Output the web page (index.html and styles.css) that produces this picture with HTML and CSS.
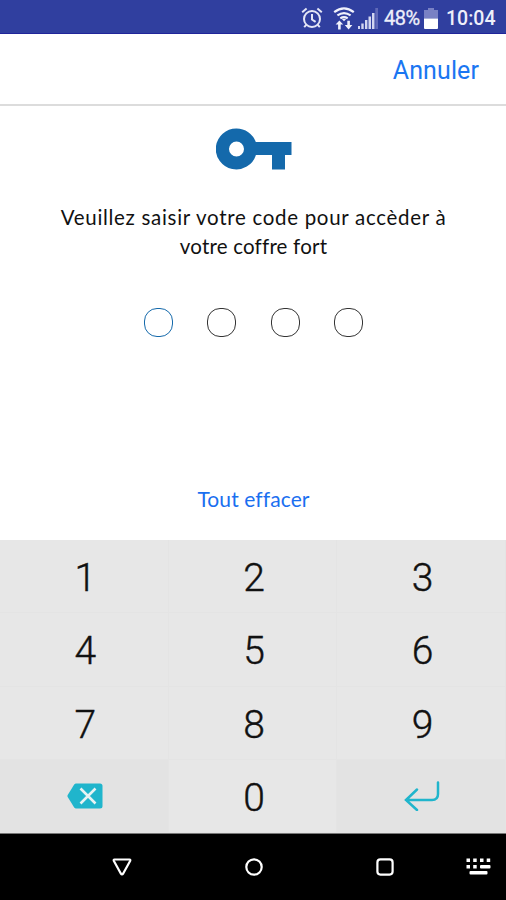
FILE: index.html
```
<!DOCTYPE html>
<html lang="fr">
<head>
  <meta charset="UTF-8">
  <meta name="viewport" content="width=device-width, initial-scale=1">
  <title>Coffre fort</title>
  <link rel="stylesheet" href="styles.css">
</head>

<body>
  <div class="status-bar">
    <svg class="icon-alarm" width="22" height="22" viewBox="0 0 22 22" fill="none" stroke="#e4e6f6" stroke-width="2">
      <circle cx="11" cy="12" r="8"/>
      <path d="M11 7v5.500l3.600 2.400M1.200 5.200l4.400-3.700M20.800 5.200l-4.400-3.700M5.500 17.600l-2.300 2.600M16.500 17.600l2.300 2.600"/>
    </svg>
    <svg class="icon-wifi" width="22" height="23" viewBox="0 0 22 23" fill="none" stroke="#f1f2fb" stroke-width="2.200">
      <path d="M1.200 5.200q9.800-7.600 19.600 0M4.400 8.400q6.600-4.600 13.200 0M7.300 11.300q3.700-2.400 7.400 0"/>
      <path d="M8.600 11.800h4.800l-2.400 2.500z" fill="#f1f2fb" stroke="none"/>
      <path d="M2.600 17.600l3.800-4.200 3.800 4.200H7.700v4.800H5.100v-4.800zM11.800 18h2.500v-4.200h2.600V18h2.500l-3.800 4.500z" fill="#f1f2fb" stroke="none"/>
    </svg>
    <svg class="icon-signal" width="20" height="21" viewBox="0 0 20 21">
      <path d="M0 18h2v3H0zM3.300 15.500h2.400V21H3.300zM7 12h2.400v9H7zM10.500 8.500H13V21h-2.500zM14 5h2.500v16H14z" fill="#d3d6f0"/>
      <path d="M17.300 0H20v21h-2.700z" fill="#6069b8"/>
    </svg>
    <span class="battery-level">48%</span>
    <svg class="icon-battery" width="14" height="21" viewBox="0 0 14 21">
      <path d="M4 0h6v2h4v8.500H0V2h4z" fill="#7981c4"/>
      <path d="M0 10.500h14V20q0 1-1 1H1q-1 0-1-1z" fill="#fff"/>
    </svg>
    <span class="clock">10:04</span>
  </div>

  <div class="header">
    <a class="cancel">Annuler</a>
  </div>

  <div class="content">
    <svg class="icon-key" width="76" height="42" viewBox="0 0 76 42">
      <path fill="#1469ab" fill-rule="evenodd" d="M20.500 .5a20.500 20.500 0 0 1 19.300 13.500H75.500v13H69v14.500H56V27H39.900A20.500 20.500 0 1 1 20.500 .5zM20.500 13.500a7.500 7.500 0 1 0 0 15a7.500 7.500 0 0 0 0-15z"/>
    </svg>
    <p class="message"><span class="line-one">Veuillez saisir votre code pour accèder à</span><br><span class="line-two">votre coffre fort</span></p>
    <div class="code">
      <span class="digit active"></span>
      <span class="digit"></span>
      <span class="digit"></span>
      <span class="digit"></span>
    </div>
    <a class="clear">Tout effacer</a>
  </div>

  <div class="keypad">
    <div class="key">1</div>
    <div class="key">2</div>
    <div class="key">3</div>
    <div class="key">4</div>
    <div class="key">5</div>
    <div class="key">6</div>
    <div class="key">7</div>
    <div class="key">8</div>
    <div class="key">9</div>
    <div class="key action">
      <svg width="36" height="26" viewBox="0 0 36 26">
        <path d="M9 .5H33q2.500 0 2.500 2.500V23q0 2.500-2.500 2.500H9q-1 0-1.800-1L.7 14q-.6-1 0-2L7.200 1.500Q8 .5 9 .5z" fill="#20b5cc"/>
        <path d="M13.500 5.500l15 15M28.500 5.500l-15 15" stroke="#e8f3f3" stroke-width="2.600" fill="none"/>
      </svg>
    </div>
    <div class="key">0</div>
    <div class="key action enter">
      <svg width="36" height="30" viewBox="0 0 36 30" fill="none" stroke="#20b5cc" stroke-width="2.500" stroke-linecap="round">
        <path d="M34 1.500V13q0 6-6 6H2M13 8.500L2 19l11 10"/>
      </svg>
    </div>
  </div>

  <div class="nav-bar">
    <svg width="20" height="18" viewBox="0 0 20 18" fill="none" stroke="#fff" stroke-width="2.200" stroke-linejoin="round">
      <path d="M2.500 1.500h15q1.300 0 .6 1.500l-6.900 12.500q-1.200 1.600-2.400 0L1.900 3q-.7-1.500.6-1.500z"/>
    </svg>
    <svg width="18" height="18" viewBox="0 0 18 18" fill="none" stroke="#fff" stroke-width="2.200">
      <circle cx="9" cy="9" r="7.700"/>
    </svg>
    <svg width="18" height="18" viewBox="0 0 18 18" fill="none" stroke="#fff" stroke-width="2.200">
      <rect x="1.400" y="1.400" width="15.200" height="15.200" rx="3"/>
    </svg>
    <svg class="icon-keyboard" width="25" height="17" viewBox="0 0 25 17" fill="#fff">
      <path d="M.5 .5h3.500V4H.5zM7.200 .5h3.500V4H7.200zM14 .5h3.500V4H14zM20.700 .5h3.500V4h-3.500zM.5 7H4v3.500H.5zM7.200 7h3.500v3.500H7.200z"/>
      <rect x="14" y="7" width="10.500" height="3.500" rx="1"/>
      <rect x="3.500" y="13" width="18" height="3.500" rx="1"/>
    </svg>
  </div>
</body>
</html>
```
FILE: styles.css
```
* {
  box-sizing: border-box;
}
body {
  margin: 0;
  height: 900px;
  display: flex;
  flex-direction: column;
  overflow: hidden;
  background: #fff;
  font-family: Roboto, sans-serif;
}
svg {
  display: block;
  flex: none;
}
.status-bar {
  height: 34px;
  flex: none;
  display: flex;
  align-items: center;
  justify-content: flex-end;
  padding: 3px 10px 0 0;
  background: #303f9f;
  border-bottom: 1px solid #20259a;
  color: #eeeffa;
}
.icon-alarm {
  margin-right: 10px;
}
.icon-wifi {
  margin-right: 3px;
}
.icon-signal {
  margin-right: 6px;
}
.battery-level {
  width: 37px;
  margin-right: 3px;
  font-size: 20px;
  letter-spacing: -0.5px;
  white-space: nowrap;
  -webkit-text-stroke: 0.3px;
}
.icon-battery {
  margin-right: 8px;
}
.clock {
  width: 50px;
  font-size: 19.5px;
  font-weight: 500;
  white-space: nowrap;
}
.header {
  height: 72px;
  flex: none;
  display: flex;
  align-items: center;
  justify-content: flex-end;
  padding: 3px 27px 0 0;
  border-bottom: 2px solid #dcdcdc;
}
.cancel {
  color: #1a76f2;
  font-size: 25px;
  letter-spacing: 0.1px;
}
.content {
  height: 434px;
  flex: none;
  display: flex;
  flex-direction: column;
  align-items: center;
  padding: 22px 0 0 1px;
}
.message {
  margin: 33px 0 0;
  text-align: center;
  font-family: Lato, sans-serif;
  font-size: 20.5px;
  line-height: 29px;
  color: #111;
  white-space: nowrap;
}
.line-one {
  letter-spacing: 0.7px;
}
.line-two {
  letter-spacing: 0.2px;
}
.code {
  display: flex;
  gap: 34.3px;
  margin-top: 47px;
}
.digit {
  width: 29px;
  height: 29px;
  border: 1.5px solid #333;
  border-radius: 13px;
}
.digit.active {
  border-color: #1469ab;
}
.clear {
  margin-top: 148px;
  font-family: Lato, sans-serif;
  font-size: 21px;
  line-height: 28px;
  letter-spacing: 0.1px;
  color: #1a6ff0;
}
.keypad {
  height: 293px;
  flex: none;
  display: grid;
  grid-template-columns: repeat(3, 1fr);
  grid-template-rows: repeat(4, 1fr);
  background: #e7e7e7;
}
.key {
  display: flex;
  align-items: center;
  justify-content: center;
  padding: 4px 0 0 3px;
  border-right: 1px solid #e4e4e4;
  border-bottom: 1px solid #e4e4e4;
  font-size: 39px;
  font-weight: 300;
  color: #111;
  -webkit-text-stroke: 0.4px #111;
}
.action {
  padding-top: 0;
  background: #e3e3e3;
}
.enter {
  padding-left: 1px;
}
.nav-bar {
  flex: 1;
  display: flex;
  align-items: center;
  padding: 0 0 1px 112px;
  gap: 113px;
  border-top: 1px solid #777;
  background: #000;
}
.icon-keyboard {
  margin-left: -41px;
}
```
